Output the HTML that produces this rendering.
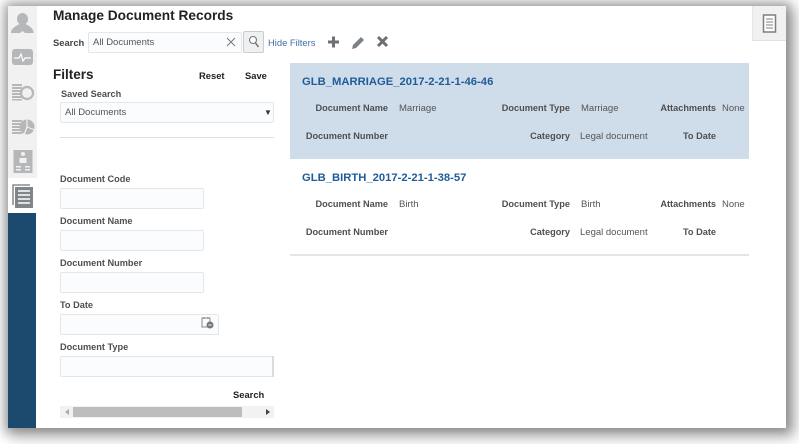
<!DOCTYPE html>
<html><head><meta charset="utf-8"><style>
html,body{margin:0;padding:0;width:799px;height:444px;overflow:hidden;background:#fff}
#p{position:absolute;left:8px;top:6px;width:778px;height:422px;background:#fff;box-shadow:0 0 10px 4px rgba(0,0,0,.27),5px 5px 14px 4px rgba(0,0,0,.28)}
#w{position:absolute;left:0;top:0;width:799px;height:444px;filter:blur(.35px)}
.a{position:absolute}
.t{position:absolute;font-family:"Liberation Sans",sans-serif;white-space:nowrap;line-height:12px}
.l{font-size:9.2px;font-weight:bold;color:#4f4f4f}
.h{font-size:9.2px;font-weight:bold;color:#4f4f4f;text-align:right}
.v{font-size:9.5px;color:#555}
.b{font-size:9.4px;font-weight:bold;color:#222}
.i{position:absolute;box-sizing:border-box;background:#fbfcfe;border:1px solid #e3e7ec;border-radius:2px;height:21px}
.g{position:absolute;font-family:"Liberation Sans",sans-serif;font-size:11.25px;font-weight:bold;color:#1f5c99;line-height:14px;white-space:nowrap}
</style></head><body>
<div id="p"></div>
<div id="w">
<div class="a" style="left:8px;top:6px;width:29px;height:172px;background:#f1f1f1"></div>
<div class="a" style="left:8px;top:213px;width:28px;height:215px;background:#1c4a6e"></div>
<svg class="a" style="left:8px;top:6px" width="29" height="208" viewBox="8 6 29 208">
<g fill="#b5b7b8">
<ellipse cx="22.500" cy="19" rx="5.500" ry="6"/><path d="M11 33c0-5 5-7 8.500-9h6c3.500 2 8 4 8 9H25l-2.500-2-2.500 2z"/>
<rect x="12" y="49" width="21" height="16" rx="3"/>
<rect x="12" y="84" width="10" height="2"/><rect x="12" y="87" width="10" height="2"/><rect x="12" y="90" width="10" height="2"/><rect x="12" y="93" width="10" height="2"/><rect x="12" y="96" width="10" height="2"/><rect x="12" y="99" width="10" height="1.500"/>
<rect x="12" y="120" width="10" height="2"/><rect x="12" y="123" width="10" height="2"/><rect x="12" y="126" width="10" height="2"/><rect x="12" y="129" width="10" height="2"/><rect x="12" y="132" width="10" height="2"/>
<circle cx="27" cy="127" r="7.500"/>
<rect x="13.500" y="150" width="19" height="23"/>
</g>
<path d="M14 58h5l2-4 2 7 2-3h6" fill="none" stroke="#fff" stroke-width="1.200"/>
<circle cx="27" cy="93" r="6" fill="#f1f1f1" stroke="#b5b7b8" stroke-width="2.200"/>
<path d="M27 127V118M27 127l8 3M27 127l-3 8" stroke="#f1f1f1" stroke-width="1.200"/>
<circle cx="23" cy="154" r="2" fill="#f1f1f1"/><path d="M19.500 158h7v5h-7z" fill="#f1f1f1"/>
<path d="M16 166h5v1.500h-5zM16 169h5v1.500h-5zM25 166h5v1.500h-5zM25 169h5v1.500h-5z" fill="#f1f1f1"/>
<path d="M13 205v-20h17" fill="none" stroke="#70767b" stroke-width="1.300"/>
<rect x="15" y="187" width="18" height="21" fill="#7f8589"/>
<path d="M18 191h12M18 195h12M18 199h12M18 203h12" stroke="#fff" stroke-width="1.500"/>
</svg>

<div class="t" style="left:53px;top:8px;font-size:13.7px;line-height:16px;font-weight:bold;color:#222">Manage Document Records</div>
<div class="t b" style="left:53px;top:37px;color:#444">Search</div>
<div class="i" style="left:88px;top:32px;width:154px;height:21px"></div>
<div class="t v" style="left:93px;top:37px">All Documents</div>
<svg class="a" style="left:226px;top:37px" width="10" height="10"><path d="M1 1l8 8M9 1l-8 8" stroke="#777" stroke-width="1"/></svg>
<div class="a" style="left:243px;top:31px;width:21px;height:22px;box-sizing:border-box;background:#eef0f2;border:1px solid #c9cdd1;border-radius:2px"></div>
<svg class="a" style="left:243px;top:31px" width="21" height="22"><circle cx="10" cy="9" r="3.500" fill="#fff" stroke="#777" stroke-width="1.100"/><path d="M12.500 12l3 4" stroke="#777" stroke-width="1.500"/></svg>
<div class="t" style="left:268px;top:37px;font-size:9.4px;color:#3f6ea8">Hide Filters</div>
<svg class="a" style="left:326px;top:34px" width="64" height="16">
<path d="M2 8h11M7.500 2.500v11" stroke="#6c7175" stroke-width="3"/>
<path d="M26 15l1-4 8-8 3 3-8 8z" fill="#7c8185"/>
<path d="M52 3l9 9M61 3l-9 9" stroke="#6c7175" stroke-width="3"/>
</svg>

<div class="t" style="left:53px;top:67px;font-size:13.5px;line-height:16px;font-weight:bold;color:#222">Filters</div>
<div class="t b" style="left:199px;top:70px">Reset</div>
<div class="t b" style="left:245px;top:70px">Save</div>
<div class="t l" style="left:61px;top:88px">Saved Search</div>
<div class="i" style="left:60px;top:102px;width:214px;height:21px"></div>
<div class="t v" style="left:65px;top:107px">All Documents</div>
<div class="t" style="left:264px;top:107px;font-size:8px;color:#333">&#9660;</div>
<div class="a" style="left:60px;top:137px;width:214px;height:1px;background:#dde2e7"></div>

<div class="t l" style="left:60px;top:173px">Document Code</div>
<div class="i" style="left:60px;top:188px;width:144px"></div>
<div class="t l" style="left:60px;top:215px">Document Name</div>
<div class="i" style="left:60px;top:230px;width:144px"></div>
<div class="t l" style="left:60px;top:257px">Document Number</div>
<div class="i" style="left:60px;top:272px;width:144px"></div>
<div class="t l" style="left:60px;top:299px">To Date</div>
<div class="i" style="left:60px;top:314px;width:159px"></div>
<svg class="a" style="left:200px;top:316px" width="16" height="14"><rect x="2" y="2" width="8" height="9" fill="none" stroke="#888" stroke-width="1"/><path d="M4 1v2M8 1v2" stroke="#888"/><circle cx="10" cy="9" r="3.500" fill="#777"/><path d="M8.500 9h3" stroke="#fff"/></svg>
<div class="t l" style="left:60px;top:341px">Document Type</div>
<div class="i" style="left:60px;top:356px;width:214px"></div>
<div class="a" style="left:272px;top:356px;width:2px;height:21px;background:#d7dce2"></div>
<div class="t b" style="left:233px;top:389px">Search</div>
<div class="a" style="left:60px;top:406px;width:214px;height:12px;background:#f2f2f2"></div>
<div class="a" style="left:73px;top:407px;width:169px;height:10px;background:#bdbdbd"></div>
<div class="a" style="left:65px;top:409px;border:3px solid transparent;border-left:0;border-right:4px solid #aaa"></div>
<div class="a" style="left:266px;top:409px;border:3px solid transparent;border-right:0;border-left:4px solid #444"></div>

<div class="a" style="left:290px;top:63px;width:459px;height:96px;background:#cfdcea"></div>
<div class="a" style="left:290px;top:254px;width:459px;height:2px;background:#e5e5e5"></div>
<div class="g" style="left:302px;top:75px">GLB_MARRIAGE_2017-2-21-1-46-46</div>
<div class="g" style="left:302px;top:171px">GLB_BIRTH_2017-2-21-1-38-57</div>

<div class="t h" style="right:411px;top:102px">Document Name</div>
<div class="t v" style="left:399px;top:103px">Marriage</div>
<div class="t h" style="right:229px;top:102px">Document Type</div>
<div class="t v" style="left:581px;top:103px">Marriage</div>
<div class="t h" style="right:83px;top:102px">Attachments</div>
<div class="t v" style="left:722px;top:103px">None</div>
<div class="t h" style="right:411px;top:130px">Document Number</div>
<div class="t h" style="right:229px;top:130px">Category</div>
<div class="t v" style="left:580px;top:131px">Legal document</div>
<div class="t h" style="right:83px;top:130px">To Date</div>

<div class="t h" style="right:411px;top:198px">Document Name</div>
<div class="t v" style="left:399px;top:199px">Birth</div>
<div class="t h" style="right:229px;top:198px">Document Type</div>
<div class="t v" style="left:581px;top:199px">Birth</div>
<div class="t h" style="right:83px;top:198px">Attachments</div>
<div class="t v" style="left:722px;top:199px">None</div>
<div class="t h" style="right:411px;top:226px">Document Number</div>
<div class="t h" style="right:229px;top:226px">Category</div>
<div class="t v" style="left:580px;top:227px">Legal document</div>
<div class="t h" style="right:83px;top:226px">To Date</div>

<div class="a" style="left:752px;top:6px;width:34px;height:35px;background:#f1f1f1;border-left:1px solid #e4e6e8;border-bottom:1px solid #dfe2e5;box-sizing:border-box"></div>
<svg class="a" style="left:762px;top:14px" width="16" height="20"><rect x="1.500" y="1" width="12" height="17" fill="#fff" stroke="#7f7f7f" stroke-width="1.500"/><path d="M4 5h7M4 8h7M4 11h7M4 14h7" stroke="#7f7f7f" stroke-width="1"/></svg>
</div>
</body></html>
